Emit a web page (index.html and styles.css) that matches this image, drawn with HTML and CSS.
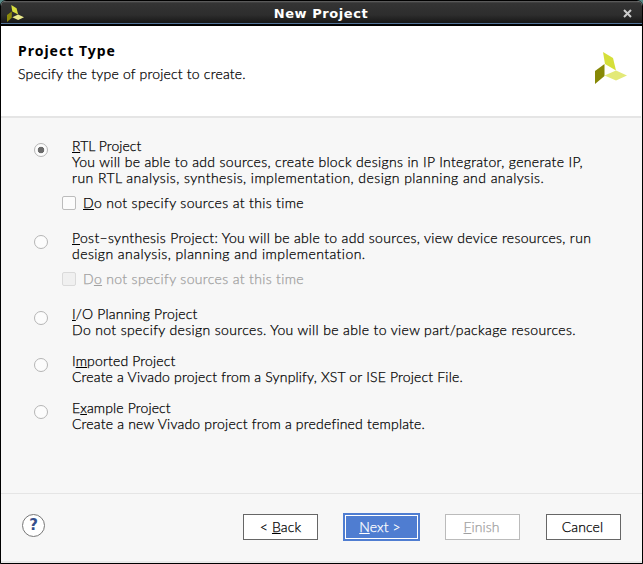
FILE: index.html
```html
<!DOCTYPE html>
<html lang="en">
<head>
<meta charset="utf-8">
<title>New Project</title>
<link rel="stylesheet" href="styles.css">
</head>
<body>
<div class="window">
  <div class="titlebar">
    <svg class="app-icon" viewBox="0 0 32 32" width="17" height="17"><path fill="#d8dd3e" d="M8 0 18 6 21 18 10 12Z"/><path fill="#8c8a0b" d="M0 19 9 12V24L0 32Z"/><path fill="#ebea8c" d="M10 23 21 18 32 23 21 28Z"/></svg>
    <span class="title">New Project</span>
    <svg class="close" viewBox="0 0 9 9" width="9" height="9"><path d="M1 1 8 8M8 1 1 8"/></svg>
  </div>
  <header class="header">
    <div>
      <h1>Project Type</h1>
      <p class="subtitle">Specify the type of project to create.</p>
    </div>
    <svg class="logo" viewBox="0 0 32 32" width="32" height="32"><path fill="#d5df3a" d="M8 0 18 6 21 18.5 10 12Z"/><path fill="#868806" d="M0 19 9.5 12V24L0 32Z"/><path fill="#e3e978" d="M9.5 23.5 21 18.5 32 23.5 21 28.5Z"/></svg>
  </header>
  <main class="options">
    <section class="option">
      <span class="radio checked"></span>
      <div class="copy">
        <p class="name rtl"><u>R</u>TL Project</p>
        <p class="rtl-a">You will be able to add sources, create block designs in IP Integrator, generate IP,</p>
        <p class="rtl-b">run RTL analysis, synthesis, implementation, design planning and analysis.</p>
        <div class="check"><span class="box"></span><p class="check-label"><u>D</u>o not specify sources at this time</p></div>
      </div>
    </section>
    <section class="option">
      <span class="radio"></span>
      <div class="copy">
        <p class="post-a"><u>P</u>ost–synthesis Project: You will be able to add sources, view device resources, run</p>
        <p class="post-b">design analysis, planning and implementation.</p>
        <div class="check disabled"><span class="box"></span><p class="check-label">D<u>o</u> not specify sources at this time</p></div>
      </div>
    </section>
    <section class="option">
      <span class="radio"></span>
      <div class="copy">
        <p class="name io"><u>I</u>/O Planning Project</p>
        <p class="io-a">Do not specify design sources. You will be able to view part/package resources.</p>
      </div>
    </section>
    <section class="option">
      <span class="radio"></span>
      <div class="copy">
        <p class="name imported">I<u>m</u>ported Project</p>
        <p class="imported-a">Create a Vivado project from a Synplify, XST or ISE Project File.</p>
      </div>
    </section>
    <section class="option">
      <span class="radio"></span>
      <div class="copy">
        <p class="name example">E<u>x</u>ample Project</p>
        <p class="example-a">Create a new Vivado project from a predefined template.</p>
      </div>
    </section>
  </main>
  <footer class="footer">
    <button class="help">?</button>
    <button class="btn back">&lt; <u>B</u>ack</button>
    <button class="btn next"><span><u>N</u>ext &gt;</span></button>
    <button class="btn finish" disabled><u>F</u>inish</button>
    <button class="btn cancel">Cancel</button>
  </footer>
</div>
</body>
</html>
```
FILE: styles.css
```css
* { box-sizing: border-box; }
body { margin: 0; background: #568987; font: 300 14px/16px Lato, "Open Sans", sans-serif; color: #000; }
h1, p { margin: 0; white-space: nowrap; }
p, .btn { -webkit-text-stroke: .25px currentColor; }
u { text-decoration: underline; text-decoration-thickness: 1px; text-underline-offset: 1px; text-decoration-skip-ink: none; }
.window { width: 643px; height: 564px; display: flex; flex-direction: column; border: 1px solid #000; border-radius: 6px 6px 0 0; background: #f7f7f7; overflow: hidden; }
.titlebar { height: 25px; flex: none; display: flex; align-items: center; padding: 0 10px 0 6px; background: linear-gradient(#666 0, #343434 2px, #2d2d2d 14px, #171717 22px, #527399 22px, #527399 23px, #000 23px); }
.app-icon { flex: none; }
.title { flex: 1; text-align: center; color: #fff; font: bold 13px/22px "DejaVu Sans", sans-serif; letter-spacing: .55px; padding-right: 5px; }
.close { flex: none; fill: none; stroke: #ccc; stroke-width: 2; }
.header { height: 92px; flex: none; display: flex; justify-content: space-between; padding: 15px 14px 0 17px; background: #fff; border-bottom: 2px solid #e5e5e5; margin: 0 1px 0 0; }
h1 { font: bold 14px/20px "Noto Sans", sans-serif; letter-spacing: 1px; }
.subtitle { margin-top: 5px; letter-spacing: .2px; }
.logo { margin-top: 11px; flex: none; }
.options { height: 375px; flex: none; padding: 20px 0 0 33px; display: flex; flex-direction: column; }
.option { display: flex; align-items: flex-start; gap: 24px; margin-bottom: 15px; }
.radio { width: 14px; height: 14px; margin-top: 5px; border: 1px solid #b5b5b5; border-radius: 50%; background: #fcfcfc; flex: none; }
.radio.checked { background: radial-gradient(circle, #6b6b6b 0 3px, #fcfcfc 3.6px); }
.check { display: flex; align-items: center; gap: 7px; height: 28px; margin: 3px 0 -2px -10px; }
.check .box { width: 14px; height: 14px; border: 1px solid #bcbcbc; border-radius: 2px; background: #fcfcfc; }
.check.disabled { color: #a0a0a0; }
.disabled .box { background: #f0f0f0; border-color: #dadada; }
.rtl { letter-spacing: .05px; }
.rtl-a { letter-spacing: .33px; }
.rtl-b { letter-spacing: .44px; }
.check-label { letter-spacing: .35px; }
.post-a { letter-spacing: .315px; }
.post-b { letter-spacing: .445px; }
.io { letter-spacing: .19px; }
.io-a { letter-spacing: .36px; }
.imported { letter-spacing: .15px; }
.imported-a { letter-spacing: .18px; }
.example { letter-spacing: .13px; }
.example-a { letter-spacing: .2px; }
.footer { flex: 1; border-top: 1px solid #e5e5e5; border-bottom: 2px solid #e9e9e9; padding: 19px 21px 0; display: flex; align-items: flex-start; }
button { font: inherit; padding: 0; margin: 0; color: #000; }
.help { width: 23px; height: 23px; margin: 1px auto 0 0; border: 1px solid #777; border-radius: 50%; background: #fff; color: #354f8c; font: bold 15px/21px "DejaVu Sans", sans-serif; }
.btn { width: 75px; height: 26px; margin: 1px 0 0 25px; border: 1px solid #666; background: #fff; letter-spacing: .1px; }
.btn.next { width: 77px; height: 28px; margin-top: 0; border: 2px solid #4f7dd1; padding: 0; background: #4f7dd1; color: #fff; }
.next span { display: block; border: 1px solid #fff; height: 24px; line-height: 22px; padding-right: 3px; }
.btn.finish { border-color: #bbb; color: #a0a0a0; padding-right: 2px; }
.btn.cancel { margin-left: 26px; padding-right: 2px; }
```
